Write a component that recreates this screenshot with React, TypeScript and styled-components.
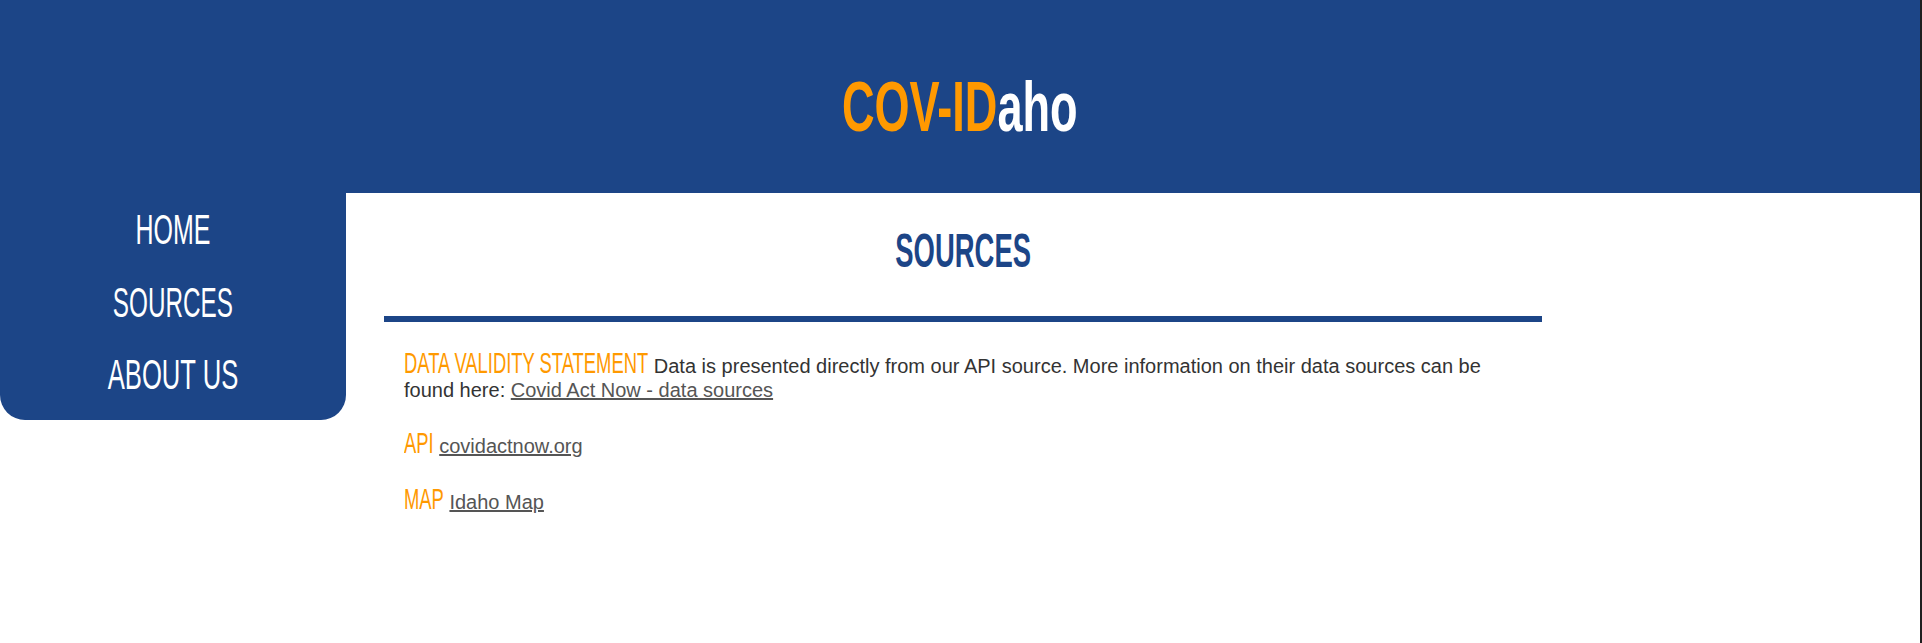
import React from "react";
import styled, { createGlobalStyle } from "styled-components";

const BLUE = "#1c4587";
const ORANGE = "#ff9900";

const GlobalStyle = createGlobalStyle`
  html, body { margin: 0; padding: 0; }
  body {
    background: #1f1f1f;
    font-family: "Liberation Sans", Arial, sans-serif;
  }
`;

const Page = styled.div`
  width: 1920px;
  min-height: 643px;
  background: #ffffff;
`;

const Header = styled.header`
  background: ${BLUE};
  padding: 72px 0 51px;
  text-align: center;
`;

const Title = styled.h1`
  margin: 0;
  display: inline-block;
  font-family: "Liberation Sans", Arial, sans-serif;
  font-size: 70px;
  line-height: 1;
  font-weight: 700;
  color: ${ORANGE};
  transform: scaleX(0.645);
  transform-origin: center;
`;

const TitleTail = styled.span`
  color: #ffffff;
`;

const Body = styled.div`
  display: flex;
  align-items: flex-start;
`;

const Sidebar = styled.nav`
  width: 346px;
  flex: 0 0 346px;
  background: ${BLUE};
  border-radius: 0 0 25px 25px;
  padding: 1px 0 8px;
  display: flex;
  flex-direction: column;
  align-items: center;
`;

const NavLink = styled.a<{ $sx: number }>`
  display: inline-block;
  font-size: 42px;
  line-height: 72.5px;
  color: #ffffff;
  text-decoration: none;
  white-space: nowrap;
  transform: scaleX(${(p) => p.$sx});
  transform-origin: center;
  cursor: pointer;
`;

const Main = styled.main`
  margin-left: 38px;
  width: 1158px;
`;

const Heading = styled.h2`
  margin: 32.6px 0 0;
  text-align: center;
  font-size: 49px;
  line-height: 1;
  font-weight: 700;
  color: ${BLUE};
`;

const HeadingText = styled.span`
  display: inline-block;
  transform: scaleX(0.56);
  transform-origin: center;
`;

const Rule = styled.div`
  height: 6px;
  background: ${BLUE};
  margin-top: 41.4px;
`;

const Entries = styled.section`
  padding: 32px 20px 0;
`;

const Entry = styled.p`
  margin: 0 0 32px;
  font-size: 20px;
  line-height: 24px;
  color: #333333;
`;

const Label = styled.span`
  display: inline-block;
  font-size: 18.4px;
  line-height: 1;
  color: ${ORANGE};
  transform: scaleY(1.58);
  transform-origin: center 84.65%;
`;

const Link = styled.a`
  color: #555555;
  text-decoration: underline;
`;

export default function App() {
  return (
    <>
      <GlobalStyle />
      <Page>
        <Header>
          <Title>
            COV-ID<TitleTail>aho</TitleTail>
          </Title>
        </Header>
        <Body>
          <Sidebar>
            <NavLink $sx={0.595}>HOME</NavLink>
            <NavLink $sx={0.578}>SOURCES</NavLink>
            <NavLink $sx={0.61}>ABOUT US</NavLink>
          </Sidebar>
          <Main>
            <Heading>
              <HeadingText>SOURCES</HeadingText>
            </Heading>
            <Rule />
            <Entries>
              <Entry>
                <Label>DATA VALIDITY STATEMENT</Label> Data is presented directly
                from our API source. More information on their data sources can
                be found here: <Link>Covid Act Now - data sources</Link>
              </Entry>
              <Entry>
                <Label>API</Label> <Link>covidactnow.org</Link>
              </Entry>
              <Entry>
                <Label>MAP</Label> <Link>Idaho Map</Link>
              </Entry>
            </Entries>
          </Main>
        </Body>
      </Page>
    </>
  );
}
